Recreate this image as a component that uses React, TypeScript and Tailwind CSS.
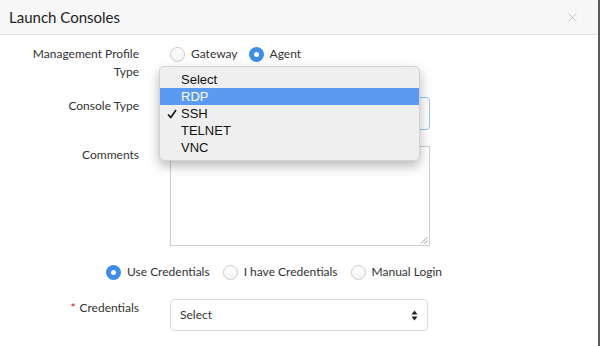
import { X } from "lucide-react";

function Radio({ checked, label }: { checked?: boolean; label: string }) {
  return (
    <label className="flex items-center gap-[6px]">
      {checked ? (
        <span className="flex h-[15px] w-[15px] items-center justify-center rounded-full bg-[#3d8ee9]">
          <span className="h-[5px] w-[5px] rounded-full bg-white" />
        </span>
      ) : (
        <span className="h-[15px] w-[15px] rounded-full border border-[#c9c9c9] bg-gradient-to-b from-white to-[#f3f3f3]" />
      )}
      <span>{label}</span>
    </label>
  );
}

function Arrows() {
  return (
    <svg width="7" height="11" viewBox="0 0 7 11" className="text-[#222]">
      <path d="M3.5 0.5 L6.5 4.5 H0.5 Z" fill="currentColor" />
      <path d="M3.5 10.5 L6.5 6.5 H0.5 Z" fill="currentColor" />
    </svg>
  );
}

const options = ["Select", "RDP", "SSH", "TELNET", "VNC"];

function App() {
  return (
    <div
      className="relative h-[346px] w-[600px] overflow-hidden border-r-2 border-[#5a5a5a] bg-white text-[12px] leading-[18px] text-[#333]"
      style={{ fontFamily: "Lato, 'Open Sans', sans-serif" }}
    >
      <div className="flex h-[35px] items-center justify-between border-b border-[#e1e1e1] bg-[#f7f7f7] pl-[9px] pr-[18px]">
        <h1 className="text-[15px] text-[#222]">Launch Consoles</h1>
        <X size={15} strokeWidth={1.2} className="text-[#b5b5b5]" />
      </div>

      <div className="flex flex-col">
        <div className="mt-[10px] flex">
          <div className="w-[139px] text-right">
            Management Profile
            <br />
            Type
          </div>
          <div className="ml-[31px] flex h-[18px] items-center gap-[11px]">
            <Radio label="Gateway" />
            <Radio checked label="Agent" />
          </div>
        </div>

        <div className="mt-[16px] flex">
          <div className="w-[139px] text-right">Console Type</div>
          <div className="ml-[31px] flex h-[33px] w-[260px] items-center justify-between rounded-[4px] border border-[#9cc3ef] px-[9px]">
            <span>SSH</span>
            <Arrows />
          </div>
        </div>

        <div className="mt-[16px] flex">
          <div className="w-[139px] text-right">Comments</div>
          <div className="relative ml-[31px] h-[100px] w-[260px] border border-[#cfcfcf]">
            <svg width="8" height="8" viewBox="0 0 8 8" className="absolute bottom-[1px] right-[1px]">
              <path d="M7.5 1 L1 7.5 M7.5 4.5 L4.5 7.5" stroke="#999" strokeWidth="1" />
            </svg>
          </div>
        </div>

        <div className="ml-[106px] mt-[17px] flex h-[18px] items-center gap-[13px]">
          <Radio checked label="Use Credentials" />
          <Radio label="I have Credentials" />
          <Radio label="Manual Login" />
        </div>

        <div className="mt-[18px] flex">
          <div className="w-[139px] text-right">
            <span className="mr-[4px] text-[#d0021b]">*</span>Credentials
          </div>
          <div className="ml-[31px] flex h-[32px] w-[258px] items-center justify-between rounded-[4px] border border-[#dadada] px-[9px]">
            <span>Select</span>
            <Arrows />
          </div>
        </div>
      </div>

      <ul
        className="absolute left-[159px] top-[66px] w-[261px] rounded-[5px] border border-[#d2d2d2] bg-[#efefef] py-[4px] text-[13px] leading-[17px] text-[#111] shadow-[0_5px_12px_rgba(0,0,0,0.28)]"
        style={{ fontFamily: "'Liberation Sans', Arial, sans-serif" }}
      >
        {options.map((o) => (
          <li
            key={o}
            className={`relative pl-[21px] ${o === "RDP" ? "bg-[#5a9bf1] text-white" : ""}`}
          >
            {o === "SSH" && (
              <svg width="10" height="10" viewBox="0 0 10 10" className="absolute left-[7px] top-[4px]">
                <path d="M1 5.5 L3.8 8.5 L9 1" fill="none" stroke="#111" strokeWidth="1.6" />
              </svg>
            )}
            {o}
          </li>
        ))}
      </ul>
    </div>
  );
}

export default App;
